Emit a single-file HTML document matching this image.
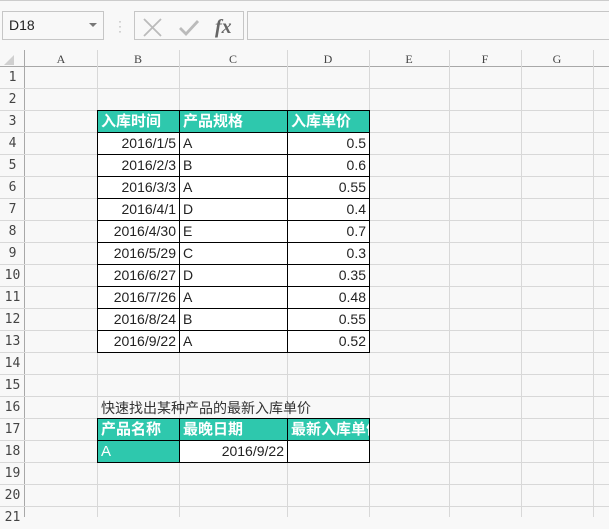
<!DOCTYPE html>
<html><head><meta charset="utf-8"><style>
*{margin:0;padding:0;box-sizing:border-box}
body{width:609px;height:517px;overflow:hidden;background:#f8f8f8;font-family:"Liberation Sans","Noto Sans CJK SC",sans-serif;position:relative}
.a{position:absolute}
.vl{position:absolute;top:50px;bottom:0;width:1px;background:#d8d8d8}
.hl{position:absolute;left:0;right:0;height:1px;background:#d8d8d8}
.rh{position:absolute;left:0;width:25px;height:22px;text-align:center;font:13px "DejaVu Sans Mono",monospace;color:#444;line-height:22px}
.ch{position:absolute;top:50px;height:17px;text-align:center;font:12px "Liberation Serif",serif;color:#444;line-height:19px}
.c{position:absolute;height:23px;border:1px solid #000;background:#fff;font-size:14px;line-height:21px;color:#222;padding:0 3px;overflow:hidden;white-space:nowrap}
.h{background:#2ec8ad;color:#fff;font-weight:bold;font-size:15px}
.r{text-align:right}
</style></head><body>
<div class="a" style="left:0;top:0;width:609px;height:1px;background:#ccc"></div>
<div class="a" style="left:2px;top:11px;width:102px;height:29px;border:1px solid #c6c6c6;background:#f8f8f8;font-size:14px;line-height:27px;padding-left:6px;color:#222">D18</div>
<div class="a" style="left:89px;top:23px;width:0;height:0;border-left:4px solid transparent;border-right:4px solid transparent;border-top:4px solid #777"></div>
<div class="a" style="left:118px;top:19px;color:#aaa;font-size:12px;line-height:5px">·<br>·<br>·</div>
<div class="a" style="left:134px;top:11px;width:110px;height:29px;border:1px solid #c6c6c6"></div>
<svg class="a" style="left:140px;top:14px" width="100" height="24"><path d="M4 5L21 22M21 5L4 22" stroke="#bbb" stroke-width="1.8"/><path d="M40 14L46 20L58 7" stroke="#bbb" stroke-width="2.8" fill="none"/><text x="75" y="19" font-family="Liberation Serif" font-style="italic" font-size="20" fill="#666" font-weight="bold">fx</text></svg>
<div class="a" style="left:247px;top:11px;width:370px;height:29px;border:1px solid #c6c6c6"></div>
<div class="a" style="left:0;top:66px;width:609px;height:1px;background:#a8a8a8"></div>
<div class="a" style="left:24px;top:50px;width:1px;height:467px;background:#a8a8a8"></div>
<div class="a" style="left:4px;top:55px;width:0;height:0;border-left:10px solid transparent;border-bottom:10px solid #d0d0d0"></div>
<div class="vl" style="left:97px"></div><div class="vl" style="left:179px"></div><div class="vl" style="left:287px"></div><div class="vl" style="left:369px"></div><div class="vl" style="left:449px"></div><div class="vl" style="left:521px"></div><div class="vl" style="left:593px"></div>
<div class="ch" style="left:25px;width:72px">A</div><div class="ch" style="left:97px;width:82px">B</div><div class="ch" style="left:179px;width:108px">C</div><div class="ch" style="left:287px;width:82px">D</div><div class="ch" style="left:369px;width:80px">E</div><div class="ch" style="left:449px;width:72px">F</div><div class="ch" style="left:521px;width:72px">G</div>
<div class="hl" style="top:88px"></div><div class="hl" style="top:110px"></div><div class="hl" style="top:132px"></div><div class="hl" style="top:154px"></div><div class="hl" style="top:176px"></div><div class="hl" style="top:198px"></div><div class="hl" style="top:220px"></div><div class="hl" style="top:242px"></div><div class="hl" style="top:264px"></div><div class="hl" style="top:286px"></div><div class="hl" style="top:308px"></div><div class="hl" style="top:330px"></div><div class="hl" style="top:352px"></div><div class="hl" style="top:374px"></div><div class="hl" style="top:396px"></div><div class="hl" style="top:418px"></div><div class="hl" style="top:440px"></div><div class="hl" style="top:462px"></div><div class="hl" style="top:484px"></div><div class="hl" style="top:506px"></div>
<div class="rh" style="top:67px">1</div><div class="rh" style="top:89px">2</div><div class="rh" style="top:111px">3</div><div class="rh" style="top:133px">4</div><div class="rh" style="top:155px">5</div><div class="rh" style="top:177px">6</div><div class="rh" style="top:199px">7</div><div class="rh" style="top:221px">8</div><div class="rh" style="top:243px">9</div><div class="rh" style="top:265px">10</div><div class="rh" style="top:287px">11</div><div class="rh" style="top:309px">12</div><div class="rh" style="top:331px">13</div><div class="rh" style="top:353px">14</div><div class="rh" style="top:375px">15</div><div class="rh" style="top:397px">16</div><div class="rh" style="top:419px">17</div><div class="rh" style="top:441px">18</div><div class="rh" style="top:463px">19</div><div class="rh" style="top:485px">20</div><div class="rh" style="top:507px">21</div>

<div class="c h" style="left:97px;top:110px;width:83px">入库时间</div><div class="c h" style="left:179px;top:110px;width:109px">产品规格</div><div class="c h" style="left:287px;top:110px;width:83px">入库单价</div>
<div class="c r" style="left:97px;top:132px;width:83px">2016/1/5</div><div class="c" style="left:179px;top:132px;width:109px">A</div><div class="c r" style="left:287px;top:132px;width:83px">0.5</div>
<div class="c r" style="left:97px;top:154px;width:83px">2016/2/3</div><div class="c" style="left:179px;top:154px;width:109px">B</div><div class="c r" style="left:287px;top:154px;width:83px">0.6</div>
<div class="c r" style="left:97px;top:176px;width:83px">2016/3/3</div><div class="c" style="left:179px;top:176px;width:109px">A</div><div class="c r" style="left:287px;top:176px;width:83px">0.55</div>
<div class="c r" style="left:97px;top:198px;width:83px">2016/4/1</div><div class="c" style="left:179px;top:198px;width:109px">D</div><div class="c r" style="left:287px;top:198px;width:83px">0.4</div>
<div class="c r" style="left:97px;top:220px;width:83px">2016/4/30</div><div class="c" style="left:179px;top:220px;width:109px">E</div><div class="c r" style="left:287px;top:220px;width:83px">0.7</div>
<div class="c r" style="left:97px;top:242px;width:83px">2016/5/29</div><div class="c" style="left:179px;top:242px;width:109px">C</div><div class="c r" style="left:287px;top:242px;width:83px">0.3</div>
<div class="c r" style="left:97px;top:264px;width:83px">2016/6/27</div><div class="c" style="left:179px;top:264px;width:109px">D</div><div class="c r" style="left:287px;top:264px;width:83px">0.35</div>
<div class="c r" style="left:97px;top:286px;width:83px">2016/7/26</div><div class="c" style="left:179px;top:286px;width:109px">A</div><div class="c r" style="left:287px;top:286px;width:83px">0.48</div>
<div class="c r" style="left:97px;top:308px;width:83px">2016/8/24</div><div class="c" style="left:179px;top:308px;width:109px">B</div><div class="c r" style="left:287px;top:308px;width:83px">0.55</div>
<div class="c r" style="left:97px;top:330px;width:83px">2016/9/22</div><div class="c" style="left:179px;top:330px;width:109px">A</div><div class="c r" style="left:287px;top:330px;width:83px">0.52</div>

<div class="a" style="left:101px;top:397px;font-size:14px;line-height:22px;color:#333;white-space:nowrap">快速找出某种产品的最新入库单价</div>
<div class="c h" style="left:97px;top:418px;width:83px">产品名称</div><div class="c h" style="left:179px;top:418px;width:109px">最晚日期</div><div class="c h" style="left:287px;top:418px;width:83px;padding-right:0">最新入库单价</div>
<div class="c h" style="left:97px;top:440px;width:83px;font-weight:normal">A</div><div class="c r" style="left:179px;top:440px;width:109px">2016/9/22</div><div class="c" style="left:287px;top:440px;width:83px"></div>
</body></html>
